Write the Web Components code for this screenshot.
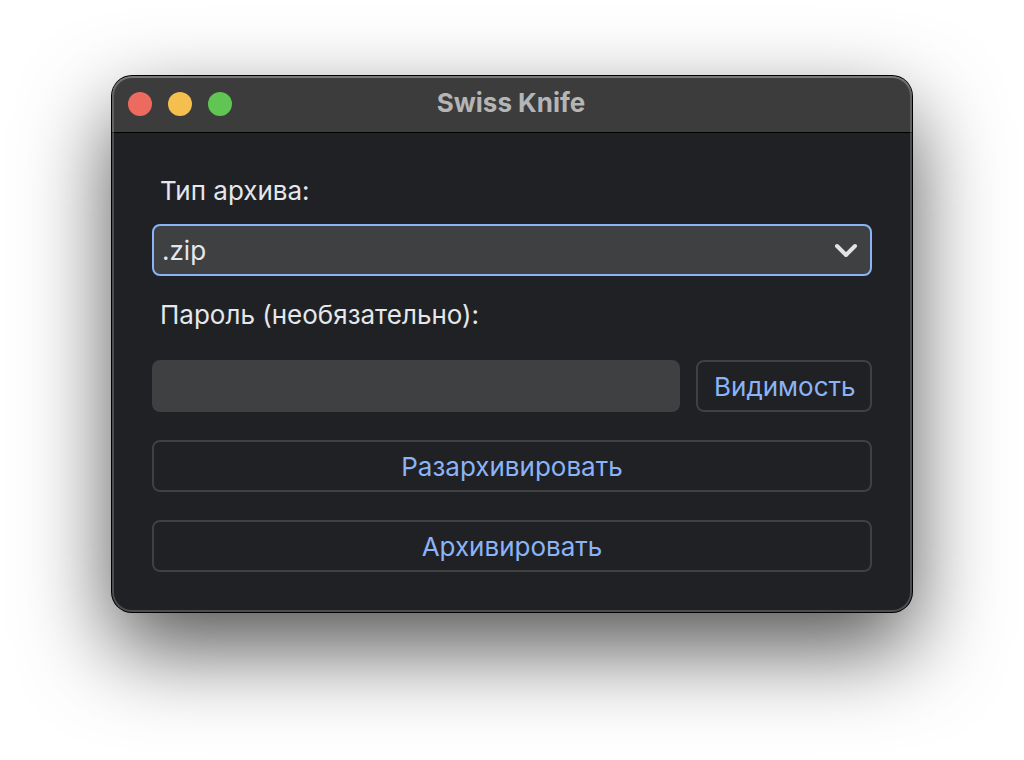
<!DOCTYPE html>
<html lang="ru">
<head>
<meta charset="utf-8">
<meta name="viewport" content="width=device-width, initial-scale=1">
<title>Swiss Knife</title>
<style>
  body { margin: 0; background: #fff; font: 26px/38px Inter, "Noto Sans", sans-serif; }
</style>
</head>
<body>
<app-window heading="Swiss Knife">
  <archive-form></archive-form>
</app-window>

<template id="window-template">
  <style>
    :host { display: block; padding: 76px 112px 148px; }
    .window {
      position: relative; overflow: visible; border-radius: 20px; background: #202124;
      box-shadow: 0 0 0 1px #000, 0 36px 88px rgba(0, 0, 0, .68);
    }
    /* light rim drawn over the title bar and the body */
    .window::after {
      content: ""; position: absolute; inset: 0; border-radius: inherit; pointer-events: none;
      box-shadow: inset 0 0 0 2px rgba(255, 255, 255, .2), inset 0 2px 0 rgba(255, 255, 255, .14);
    }
    header {
      display: grid; grid-template-columns: 1fr auto 1fr; align-items: center;
      height: 56px; padding: 0 16px; border-radius: 20px 20px 0 0; background: #3c3c3c;
    }
    .lights { display: flex; gap: 16px; }
    .lights button { width: 24px; height: 24px; padding: 0; border: 0; border-radius: 50%; }
    .close { background: #ed6a5e; }
    .minimize { background: #f5bf4f; }
    .zoom { background: #61c554; }
    h1 { margin: 0; padding: 0 2px 2px 0; font-size: 26px; line-height: 38px; font-weight: 700; color: #b5b5b5; }
    main { padding: 40px; border-radius: 0 0 20px 20px; box-shadow: inset 0 1px 0 #000; }
  </style>
  <section class="window">
    <header>
      <div class="lights">
        <button class="close" type="button" aria-label="Закрыть"></button>
        <button class="minimize" type="button" aria-label="Свернуть"></button>
        <button class="zoom" type="button" aria-label="Развернуть"></button>
      </div>
      <h1></h1>
    </header>
    <main><slot></slot></main>
  </section>
</template>

<template id="button-template">
  <style>
    :host { display: block; }
    button {
      box-sizing: border-box; width: 100%; height: 52px; padding: 2px 16px 0;
      border: 2px solid #3f4042; border-radius: 8px; background: transparent;
      font: inherit; color: #8ab4f7; white-space: nowrap;
    }
  </style>
  <button type="button"><slot></slot></button>
</template>

<template id="form-template">
  <style>
    :host { display: block; color: #e4e7eb; }
    form { display: flex; flex-direction: column; }
    label { padding: 0 8px; }
    .select { display: grid; align-items: center; margin: 14px 0 20px; }
    .select > * { grid-area: 1 / 1; }
    select, input {
      box-sizing: border-box; width: 100%; min-width: 0; height: 52px; margin: 0; padding: 2px 8px 0;
      border: 2px solid #3f4042; border-radius: 8px; outline: 0; appearance: none;
      background: #3f4042; font: inherit; color: inherit;
    }
    select { border-color: #8ab4f7; }
    svg { justify-self: end; margin-right: 12px; pointer-events: none; }
    .row { display: grid; grid-template-columns: 1fr 176px; gap: 16px; margin: 26px 0 28px; }
    .actions { display: grid; gap: 28px; }
  </style>
  <form>
    <label for="type">Тип архива:</label>
    <div class="select">
      <select id="type"><option>.zip</option></select>
      <svg width="28" height="20" viewBox="0 0 28 20" fill="none" stroke="#e1e3e6" stroke-width="4" stroke-linecap="round" stroke-linejoin="round" aria-hidden="true"><path d="M5 6l9 9 9-9"/></svg>
    </div>
    <label for="password">Пароль (необязательно):</label>
    <div class="row">
      <input id="password" type="password">
      <outline-button>Видимость</outline-button>
    </div>
    <div class="actions">
      <outline-button>Разархивировать</outline-button>
      <outline-button>Архивировать</outline-button>
    </div>
  </form>
</template>

<script>
  class TemplateElement extends HTMLElement {
    constructor() {
      super();
      const template = document.getElementById(this.constructor.template);
      this.attachShadow({ mode: "open" }).append(template.content.cloneNode(true));
    }
  }
  class AppWindow extends TemplateElement {
    static template = "window-template";
    connectedCallback() {
      this.shadowRoot.querySelector("h1").textContent = this.getAttribute("heading");
    }
  }
  class OutlineButton extends TemplateElement {
    static template = "button-template";
  }
  class ArchiveForm extends TemplateElement {
    static template = "form-template";
    connectedCallback() {
      const input = this.shadowRoot.querySelector("input");
      this.shadowRoot.querySelector(".row outline-button").addEventListener("click", () => {
        input.type = input.type === "password" ? "text" : "password";
      });
    }
  }
  customElements.define("outline-button", OutlineButton);
  customElements.define("archive-form", ArchiveForm);
  customElements.define("app-window", AppWindow);
</script>
</body>
</html>
